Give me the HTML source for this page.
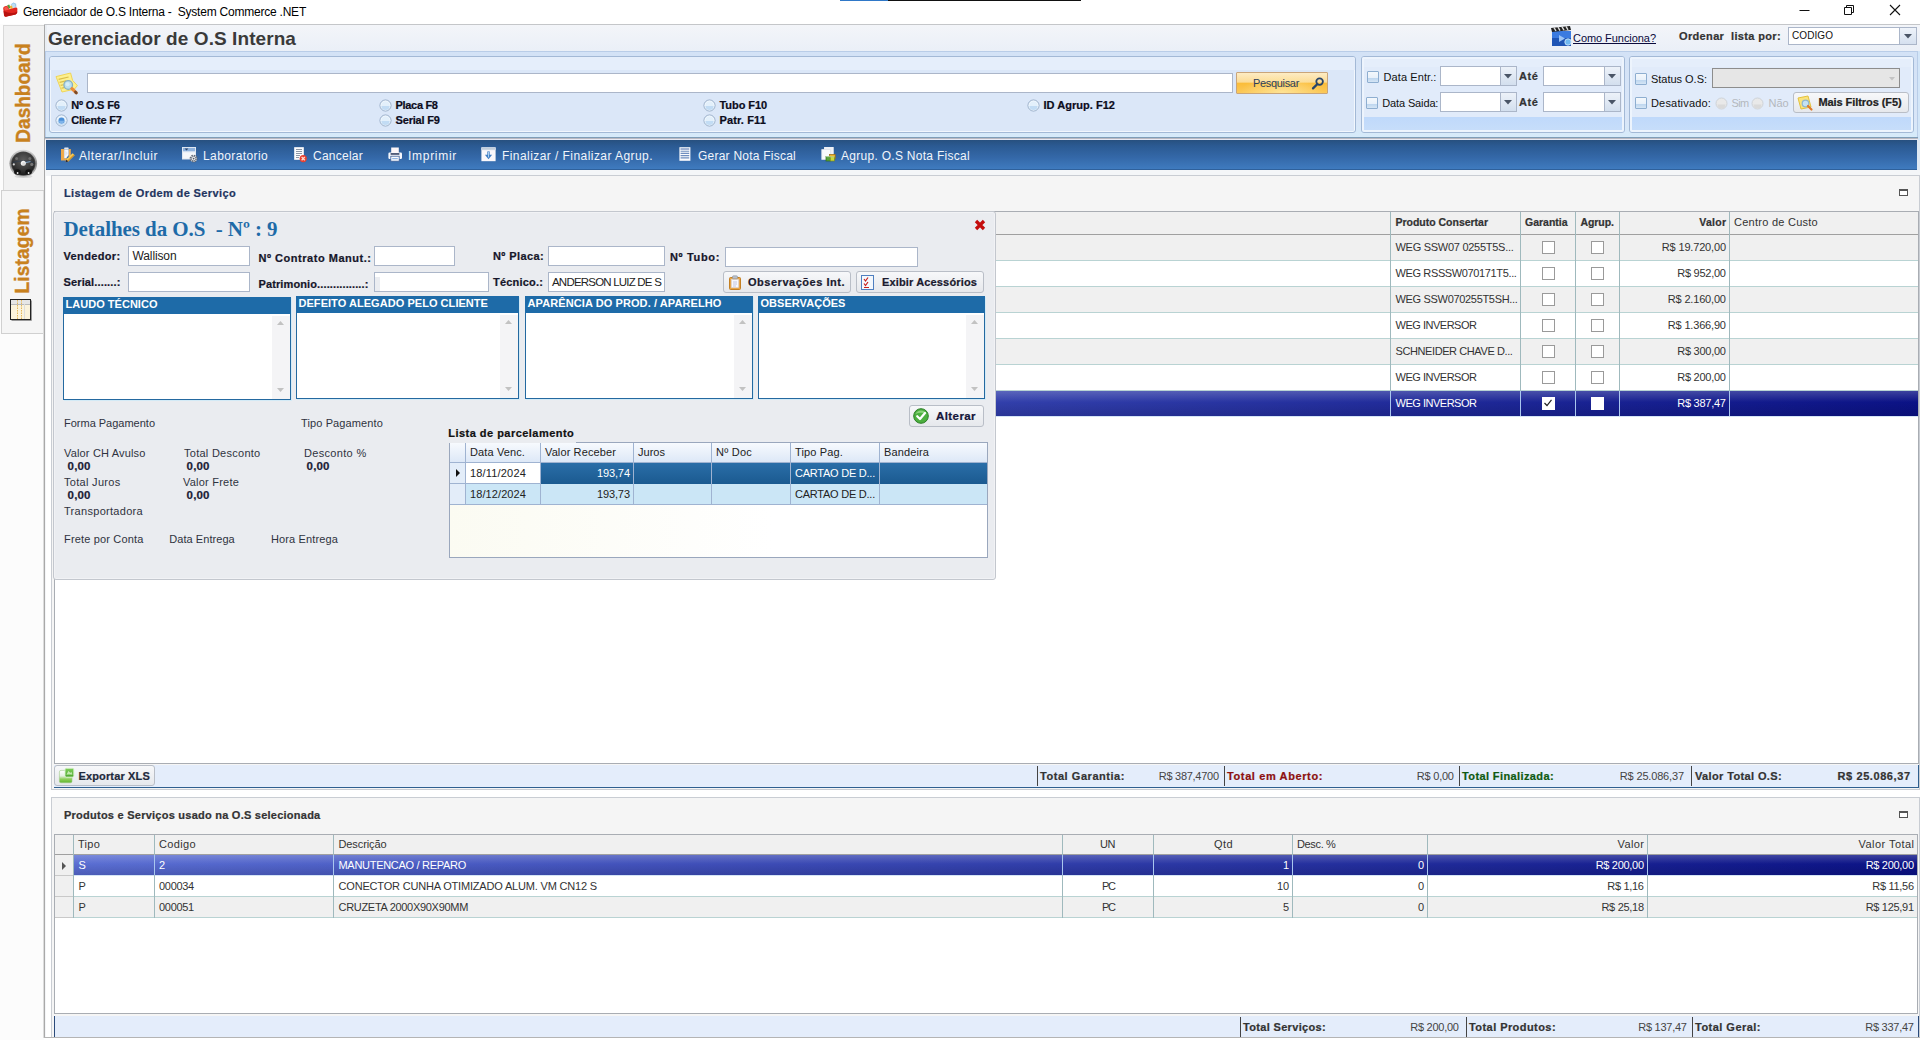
<!DOCTYPE html>
<html lang="pt-BR"><head><meta charset="utf-8"><title>Gerenciador de O.S Interna - System Commerce .NET</title>
<style>
html,body{margin:0;padding:0;background:#fff;}
body{width:1920px;height:1040px;overflow:hidden;font-family:"Liberation Sans",sans-serif;}
#app{position:relative;width:1920px;height:1040px;overflow:hidden;background:#fff;}
#app div{position:absolute;box-sizing:border-box;}
#app svg{position:absolute;overflow:visible;}
.t{position:absolute;white-space:pre;font-family:"Liberation Sans",sans-serif;}
.inp{background:#fff;border:1px solid #abb6c9;}
.btn{border:1px solid #b9bec7;border-radius:3px;background:linear-gradient(#f7f8fa,#e6e8ec);}

</style></head>
<body>
<div id="app">
<div style="left:840px;top:0px;width:48px;height:1px;background:#2f78c8;"></div>
<div style="left:888px;top:0px;width:193px;height:1px;background:#111;"></div>
<svg style="left:2px;top:2px" width="17" height="16" viewBox="0 0 17 16"><path d="M8.5 2.6 L11.4 0.6 L14.2 1.6 L14.6 5.2 L11 6.6Z" fill="#bfdff5"/><path d="M9.4 2.4 L11.6 1.2 L13.4 2 L13.6 4.6" fill="none" stroke="#8fc0e6" stroke-width=".7"/><path d="M5.2 3.2 L7.2 2.6 L8.8 6 L6.6 6.8Z" fill="#4f9e3a"/><path d="M7.6 4 L10 3.4 L10.8 6.4 L8.6 7Z" fill="#f0b43a"/><path d="M1.2 6.2 Q1.2 4.6 3 4.2 L5.2 3.8 L7.4 7.2 L13.6 5.4 Q15.2 5.2 15.4 6.8 L15.2 10.6 Q15 11.8 13.6 12.4 L4.6 14.6 Q2.6 15 2 13.4 Z" fill="#e2261f"/><path d="M1.6 9 L2.2 13.4 Q2.8 14.8 4.6 14.6 L13.6 12.4 Q15 11.8 15.2 10.6 L15.3 9.4 Q10 13 1.6 9Z" fill="#b8120f"/><path d="M2 6.2 Q2.4 5 3.6 4.8 L5 4.6 L7 7.8 L3 8.6Z" fill="#f4574a"/></svg>
<span class="t" style="top:5.00px;font-size:12px;line-height:14px;letter-spacing:-0.222px;left:23.00px;color:#000;">Gerenciador de O.S Interna -  System Commerce .NET</span>
<svg style="left:1790px;top:-1px" width="130" height="22" viewBox="0 0 130 22"><path d="M9.5 11.5 H19.5" stroke="#111" stroke-width="1" fill="none"/><path d="M54.5 8.5 H61.5 V15.5 H54.5 Z M56.5 8.5 V6.5 H63.5 V13.5 H61.5" stroke="#111" stroke-width="1" fill="none"/><path d="M100 6 L110 16 M110 6 L100 16" stroke="#111" stroke-width="1.1" fill="none"/></svg>
<div style="left:0px;top:24px;width:44px;height:1016px;background:#fcfcfc;"></div>
<div style="left:3px;top:25px;width:42px;height:166px;background:#f1f1f1;border:1px solid #d9d9d9;border-right:none;"></div>
<div style="left:1px;top:190px;width:44px;height:144px;background:#f5f5f5;border:1px solid #d0d0d0;border-right:none;"></div>
<div style="left:43px;top:191px;width:1px;height:847px;background:#dcdcdc;"></div>
<div style="left:44px;top:24px;width:1px;height:1014px;background:#a9a9a9;"></div>
<div style="left:45px;top:24px;width:2px;height:116px;background:#e9edf2;"></div>
<div style="left:45px;top:140px;width:1px;height:898px;background:#f4f5f7;"></div>
<span class="t" style="left:23px;top:93px;font-size:19px;line-height:20px;font-weight:bold;color:#c8811e;letter-spacing:0px;-webkit-text-stroke:0.35px #c8811e;transform:translate(-50%,-50%) rotate(-90deg) scale(1,1.1);">Dashboard</span>
<span class="t" style="left:21.5px;top:251px;font-size:19px;line-height:20px;font-weight:bold;color:#c8811e;letter-spacing:0.2px;-webkit-text-stroke:0.35px #c8811e;transform:translate(-50%,-50%) rotate(-90deg) scale(1,1.1);">Listagem</span>
<svg style="left:9px;top:149px" width="29" height="30" viewBox="0 0 29 30"><defs><radialGradient id="gg" cx="50%" cy="35%" r="65%"><stop offset="0" stop-color="#5e5e5e"/><stop offset="0.6" stop-color="#3a3a3a"/><stop offset="1" stop-color="#1c1c1c"/></radialGradient><linearGradient id="gr" x1="0" y1="0" x2="0" y2="1"><stop offset="0" stop-color="#d8d8d8"/><stop offset="0.5" stop-color="#8a8a8a"/><stop offset="1" stop-color="#c4c4c4"/></linearGradient></defs><ellipse cx="14.5" cy="27.5" rx="9" ry="1.6" fill="#d9d9d9"/><circle cx="14.3" cy="14.6" r="13.8" fill="url(#gr)"/><circle cx="14.3" cy="14.6" r="12.2" fill="#4a4a4a"/><circle cx="14.3" cy="14.6" r="11.4" fill="url(#gg)"/><path d="M3.5 13 Q14.3 9.5 25 13 L25 14.2 Q14.3 11 3.5 14.2Z" fill="#2b3d52" opacity=".55"/><circle cx="7.6" cy="9.4" r="1.5" fill="#6e6e6e"/><circle cx="20.8" cy="9.4" r="1.5" fill="#6e6e6e"/><circle cx="4.8" cy="15.4" r="1.1" fill="#d6d6d6"/><circle cx="22.8" cy="15.4" r="1.6" fill="#777"/><path d="M14.3 14 L21.5 12.6" stroke="#7fa3c4" stroke-width="1"/><circle cx="14.3" cy="14.2" r="2.5" fill="#f4f4f4"/><circle cx="14.6" cy="14.8" r="1.6" fill="#c9c9c9" opacity=".6"/><ellipse cx="8.4" cy="23" rx="3.3" ry="2.8" fill="#141414"/><ellipse cx="19.6" cy="23" rx="3.3" ry="2.8" fill="#141414"/><circle cx="8.6" cy="24" r=".9" fill="#e8e8e8"/><circle cx="19.6" cy="24" r=".9" fill="#e8e8e8"/></svg>
<svg style="left:10px;top:299px" width="22" height="22" viewBox="0 0 22 22"><rect x="0.5" y="0.5" width="20" height="20" fill="#fbf3dc" stroke="#222"/><rect x="1" y="1" width="19" height="4" fill="#e6e6e6"/><path d="M1 5.5 H20" stroke="#bbb"/><path d="M7.5 1 V20 M11.5 1 V20" stroke="#e3b65a" stroke-dasharray="1.5 1"/><path d="M14.5 5 V20" stroke="#ddd"/><path d="M1.5 21.5 H21.5 V1.5" stroke="#999" fill="none"/></svg>
<div style="left:44px;top:24px;width:1876px;height:1px;background:#c4c6c9;"></div>
<div style="left:47px;top:25px;width:1873px;height:27px;background:linear-gradient(#f3f5f9,#eaeff7);"></div>
<span class="t" style="top:28.00px;font-size:19px;line-height:21px;letter-spacing:0.076px;left:48.00px;color:#3a3a3a;font-weight:bold;">Gerenciador de O.S Interna</span>
<svg style="left:1551px;top:25.6px" width="21" height="21" viewBox="0 0 21 21"><rect x="1" y="5" width="19" height="15" fill="#1f55b5"/><rect x="1" y="5" width="19" height="7" fill="#3b7be0"/><path d="M0 2 L19 0 L20 4 L1 6 Z" fill="#222"/><path d="M3 1.6 L5 5 M7 1.2 L9 4.6 M11 .8 L13 4.2 M15 .4 L17 3.8" stroke="#ddd" stroke-width="1.4"/><path d="M8 9 L14 12.5 L8 16 Z" fill="#9cc4f5"/><circle cx="17" cy="16" r="3.2" fill="#6fb7f0" stroke="#d8ecfb" stroke-width=".8"/></svg>
<span class="t" style="top:32.00px;font-size:11px;line-height:12px;letter-spacing:-0.055px;left:1573.00px;color:#0a0a3c;text-decoration:underline;">Como Funciona?</span>
<span class="t" style="top:30.00px;font-size:11px;line-height:12px;letter-spacing:0.350px;left:1679.00px;color:#333;font-weight:bold;-webkit-text-stroke:0.22px;">Ordenar  lista por:</span>
<div class="inp" style="left:1788px;top:27px;width:129px;height:18px;"></div>
<div style="left:1899px;top:28px;width:17px;height:16px;background:linear-gradient(#eef3fa,#d5e0ef);border-left:1px solid #abb6c9;"></div>
<svg style="left:1904px;top:34px" width="8" height="5" viewBox="0 0 8 5"><path d="M0 0 H8 L4 4.5Z" fill="#4a5566"/></svg>
<span class="t" style="top:30.00px;font-size:10px;line-height:11px;letter-spacing:0.074px;left:1792.00px;color:#111;">CODIGO</span>
<div style="left:45px;top:51px;width:1875px;height:89px;background:#d3e6f8;"></div>
<div style="left:45px;top:51px;width:1873px;height:87px;background:linear-gradient(#d3e2f6,#d9e6f8 80%,#d6ebfa);border:1px solid #b9cde8;border-bottom:none;"></div>
<div style="left:45px;top:137px;width:1873px;height:1px;background:#7f9db8;"></div>
<div style="left:45px;top:138px;width:1873px;height:1px;background:#b8b8c0;"></div>
<div style="left:45px;top:139px;width:1873px;height:1px;background:#e6e8f3;"></div>
<div style="left:49px;top:56px;width:1307px;height:77px;background:#dbe7f8;border:1px solid #a3b9d6;border-radius:3px;box-shadow:inset 0 0 0 1px #f2f7fd;overflow:hidden;"><div style="left:0;top:0;right:0;height:13px;background:#e5eefb;"></div></div>
<div style="left:1361px;top:56px;width:264px;height:77px;background:#e1ebfa;border:1px solid #a3b9d6;border-radius:3px;box-shadow:inset 0 0 0 1px #f2f7fd;overflow:hidden;"><div style="left:0;top:0;right:0;height:10px;background:#e5eefb;"></div><div style="left:0;right:0;top:60px;bottom:0;background:linear-gradient(#bfd9fb,#c8defa);"></div><div style="left:0;top:0;right:0;bottom:0;border:2px solid #edf4fd;border-radius:2px;"></div></div>
<div style="left:1629px;top:56px;width:285px;height:77px;background:#e1ebfa;border:1px solid #a3b9d6;border-radius:3px;box-shadow:inset 0 0 0 1px #f2f7fd;overflow:hidden;"><div style="left:0;top:0;right:0;height:10px;background:#e5eefb;"></div><div style="left:0;right:0;top:60px;bottom:0;background:linear-gradient(#bfd9fb,#c8defa);"></div><div style="left:0;top:0;right:0;bottom:0;border:2px solid #edf4fd;border-radius:2px;"></div></div>
<svg style="left:55px;top:72px" width="24" height="23" viewBox="0 0 24 23"><path d="M1 4.6 L15.6 1 L17.6 8.4 L22.4 13.6 L19.4 17.2 L7 20 Z" fill="#fdf08e" stroke="#efd55a" stroke-width="1"/><path d="M3.6 7.4 L13.6 5 M4.6 10.4 L11 8.9 M5.6 13.4 L8.4 12.8 M6.4 16.2 L9 15.6" stroke="#d9bd4a" stroke-width="1.1"/><circle cx="13.2" cy="13" r="4.3" fill="#b9dff0" stroke="#86aebf" stroke-width="1.3"/><circle cx="12.6" cy="12.2" r="2" fill="#d4ecf7"/><path d="M17 16.6 L21 20.6" stroke="#e98a3a" stroke-width="3.2" stroke-linecap="round"/><path d="M20.4 20 L21.4 21" stroke="#7a4a2a" stroke-width="2.6" stroke-linecap="round"/></svg>
<div class="inp" style="left:87px;top:73px;width:1146px;height:20px;"></div>
<div style="left:1236px;top:72px;width:92px;height:22px;border:1px solid #c9a57a;border-radius:1px;background:radial-gradient(ellipse at 50% 100%,rgba(255,236,170,.75),rgba(255,236,170,0) 65%),linear-gradient(#fdecc4 0%,#fcdc97 45%,#fbbd3a 52%,#fbc95a 100%);"></div>
<span class="t" style="top:77.00px;font-size:11px;line-height:12px;letter-spacing:-0.324px;left:1253.00px;color:#2b3d5c;">Pesquisar</span>
<svg style="left:1311px;top:77px" width="14" height="13" viewBox="0 0 14 13"><circle cx="8.6" cy="4.6" r="3.3" fill="none" stroke="#28456b" stroke-width="1.8"/><path d="M6.2 7.2 L2 11.4" stroke="#28456b" stroke-width="2.3" stroke-linecap="round"/></svg>
<svg style="left:54.5px;top:99.3px" width="13" height="13" viewBox="0 0 13 13"><circle cx="6.5" cy="6.5" r="5.5" fill="#e3f0fb" stroke="#8fa6c2" stroke-width="1"/><circle cx="6.5" cy="6.5" r="4.6" fill="none" stroke="#f4f9fe" stroke-width=".8"/><path d="M2.4 7 A4.1 4.1 0 0 0 10.6 7Z" fill="#c2dcf4"/></svg>
<span class="t" style="top:99.00px;font-size:11px;line-height:12px;letter-spacing:-0.151px;left:71.20px;color:#0c0c1c;font-weight:bold;-webkit-text-stroke:0.22px;">Nº O.S F6</span>
<svg style="left:54.5px;top:114.3px" width="13" height="13" viewBox="0 0 13 13"><circle cx="6.5" cy="6.5" r="5.5" fill="#e3f0fb" stroke="#8fa6c2" stroke-width="1"/><circle cx="6.5" cy="6.5" r="4.6" fill="none" stroke="#f4f9fe" stroke-width=".8"/><path d="M2.4 7 A4.1 4.1 0 0 0 10.6 7Z" fill="#c2dcf4"/><circle cx="6.5" cy="6.5" r="3" fill="#4c8fd6"/><path d="M4 6.8 A2.5 2.5 0 0 0 9 6.8Z" fill="#7fb4ea"/></svg>
<span class="t" style="top:114.00px;font-size:11px;line-height:12px;letter-spacing:-0.207px;left:71.20px;color:#0c0c1c;font-weight:bold;-webkit-text-stroke:0.22px;">Cliente F7</span>
<svg style="left:378.5px;top:99.3px" width="13" height="13" viewBox="0 0 13 13"><circle cx="6.5" cy="6.5" r="5.5" fill="#e3f0fb" stroke="#8fa6c2" stroke-width="1"/><circle cx="6.5" cy="6.5" r="4.6" fill="none" stroke="#f4f9fe" stroke-width=".8"/><path d="M2.4 7 A4.1 4.1 0 0 0 10.6 7Z" fill="#c2dcf4"/></svg>
<span class="t" style="top:99.00px;font-size:11px;line-height:12px;letter-spacing:-0.330px;left:395.60px;color:#0c0c1c;font-weight:bold;-webkit-text-stroke:0.22px;">Placa F8</span>
<svg style="left:378.5px;top:114.3px" width="13" height="13" viewBox="0 0 13 13"><circle cx="6.5" cy="6.5" r="5.5" fill="#e3f0fb" stroke="#8fa6c2" stroke-width="1"/><circle cx="6.5" cy="6.5" r="4.6" fill="none" stroke="#f4f9fe" stroke-width=".8"/><path d="M2.4 7 A4.1 4.1 0 0 0 10.6 7Z" fill="#c2dcf4"/></svg>
<span class="t" style="top:114.00px;font-size:11px;line-height:12px;letter-spacing:-0.207px;left:395.60px;color:#0c0c1c;font-weight:bold;-webkit-text-stroke:0.22px;">Serial F9</span>
<svg style="left:702.5px;top:99.3px" width="13" height="13" viewBox="0 0 13 13"><circle cx="6.5" cy="6.5" r="5.5" fill="#e3f0fb" stroke="#8fa6c2" stroke-width="1"/><circle cx="6.5" cy="6.5" r="4.6" fill="none" stroke="#f4f9fe" stroke-width=".8"/><path d="M2.4 7 A4.1 4.1 0 0 0 10.6 7Z" fill="#c2dcf4"/></svg>
<span class="t" style="top:99.00px;font-size:11px;line-height:12px;letter-spacing:-0.072px;left:719.50px;color:#0c0c1c;font-weight:bold;-webkit-text-stroke:0.22px;">Tubo F10</span>
<svg style="left:702.5px;top:114.3px" width="13" height="13" viewBox="0 0 13 13"><circle cx="6.5" cy="6.5" r="5.5" fill="#e3f0fb" stroke="#8fa6c2" stroke-width="1"/><circle cx="6.5" cy="6.5" r="4.6" fill="none" stroke="#f4f9fe" stroke-width=".8"/><path d="M2.4 7 A4.1 4.1 0 0 0 10.6 7Z" fill="#c2dcf4"/></svg>
<span class="t" style="top:114.00px;font-size:11px;line-height:12px;letter-spacing:0.139px;left:719.50px;color:#0c0c1c;font-weight:bold;-webkit-text-stroke:0.22px;">Patr. F11</span>
<svg style="left:1026.5px;top:99.3px" width="13" height="13" viewBox="0 0 13 13"><circle cx="6.5" cy="6.5" r="5.5" fill="#e3f0fb" stroke="#8fa6c2" stroke-width="1"/><circle cx="6.5" cy="6.5" r="4.6" fill="none" stroke="#f4f9fe" stroke-width=".8"/><path d="M2.4 7 A4.1 4.1 0 0 0 10.6 7Z" fill="#c2dcf4"/></svg>
<span class="t" style="top:99.00px;font-size:11px;line-height:12px;letter-spacing:0.031px;left:1043.50px;color:#0c0c1c;font-weight:bold;-webkit-text-stroke:0.22px;">ID Agrup. F12</span>
<div style="left:1367px;top:71px;width:12px;height:12px;background:linear-gradient(#f4f8fc 0%,#e9f1fa 55%,#bcd5ef 60%,#d5e5f5 100%);border:1px solid #8eaed0;border-radius:1px;"></div>
<span class="t" style="top:71.00px;font-size:11px;line-height:12px;letter-spacing:0.093px;left:1383.50px;color:#111;">Data Entr.:</span>
<div style="left:1366px;top:97px;width:12px;height:12px;background:linear-gradient(#f4f8fc 0%,#e9f1fa 55%,#bcd5ef 60%,#d5e5f5 100%);border:1px solid #8eaed0;border-radius:1px;"></div>
<span class="t" style="top:97.00px;font-size:11px;line-height:12px;letter-spacing:-0.135px;left:1382.30px;color:#111;">Data Saida:</span>
<div class="inp" style="left:1440px;top:66px;width:77px;height:20px;"></div>
<div style="left:1500px;top:67px;width:16px;height:18px;background:linear-gradient(#edf2f9,#d3dfee);border-left:1px solid #abb6c9;"></div>
<svg style="left:1504.0px;top:73.5px" width="8" height="5" viewBox="0 0 8 5"><path d="M0 0 H8 L4 4.5Z" fill="#4a5566"/></svg>
<div class="inp" style="left:1543px;top:66px;width:78px;height:20px;"></div>
<div style="left:1604px;top:67px;width:16px;height:18px;background:linear-gradient(#edf2f9,#d3dfee);border-left:1px solid #abb6c9;"></div>
<svg style="left:1608.0px;top:73.5px" width="8" height="5" viewBox="0 0 8 5"><path d="M0 0 H8 L4 4.5Z" fill="#4a5566"/></svg>
<div class="inp" style="left:1440px;top:92px;width:77px;height:20px;"></div>
<div style="left:1500px;top:93px;width:16px;height:18px;background:linear-gradient(#edf2f9,#d3dfee);border-left:1px solid #abb6c9;"></div>
<svg style="left:1504.0px;top:99.5px" width="8" height="5" viewBox="0 0 8 5"><path d="M0 0 H8 L4 4.5Z" fill="#4a5566"/></svg>
<div class="inp" style="left:1543px;top:92px;width:78px;height:20px;"></div>
<div style="left:1604px;top:93px;width:16px;height:18px;background:linear-gradient(#edf2f9,#d3dfee);border-left:1px solid #abb6c9;"></div>
<svg style="left:1608.0px;top:99.5px" width="8" height="5" viewBox="0 0 8 5"><path d="M0 0 H8 L4 4.5Z" fill="#4a5566"/></svg>
<span class="t" style="top:70.00px;font-size:11px;line-height:12px;letter-spacing:0.592px;left:1519.00px;color:#333;font-weight:bold;-webkit-text-stroke:0.22px;">Até</span>
<span class="t" style="top:96.00px;font-size:11px;line-height:12px;letter-spacing:0.592px;left:1519.00px;color:#333;font-weight:bold;-webkit-text-stroke:0.22px;">Até</span>
<div style="left:1635px;top:73px;width:12px;height:12px;background:linear-gradient(#f4f8fc 0%,#e9f1fa 55%,#bcd5ef 60%,#d5e5f5 100%);border:1px solid #8eaed0;border-radius:1px;"></div>
<span class="t" style="top:73.00px;font-size:11px;line-height:12px;letter-spacing:-0.022px;left:1651.00px;color:#111;">Status O.S:</span>
<div style="left:1635px;top:97px;width:12px;height:12px;background:linear-gradient(#f4f8fc 0%,#e9f1fa 55%,#bcd5ef 60%,#d5e5f5 100%);border:1px solid #8eaed0;border-radius:1px;"></div>
<span class="t" style="top:97.00px;font-size:11px;line-height:12px;letter-spacing:0.174px;left:1651.00px;color:#111;">Desativado:</span>
<div style="left:1712px;top:68px;width:188px;height:20px;background:#e6e6e6;border:1px solid #8d8d8d;"></div>
<svg style="left:1889px;top:77.0px" width="6" height="4" viewBox="0 0 6 4"><path d="M0 0 H6 L3 3.5Z" fill="#c3c3c3"/></svg>
<svg style="left:1714.5px;top:97.0px" width="13" height="13" viewBox="0 0 13 13"><circle cx="6.5" cy="6.5" r="5.5" fill="#e9e9e9" stroke="#cfd3d8"/><path d="M2.5 7.5 A4 4 0 0 0 10.5 7.5Z" fill="#dadada"/></svg>
<span class="t" style="top:97.00px;font-size:11px;line-height:12px;letter-spacing:-0.648px;left:1731.50px;color:#b4b8bd;">Sim</span>
<svg style="left:1751.0px;top:97.0px" width="13" height="13" viewBox="0 0 13 13"><circle cx="6.5" cy="6.5" r="5.5" fill="#e9e9e9" stroke="#cfd3d8"/><path d="M2.5 7.5 A4 4 0 0 0 10.5 7.5Z" fill="#dadada"/></svg>
<span class="t" style="top:97.00px;font-size:11px;line-height:12px;letter-spacing:-0.060px;left:1768.50px;color:#b4b8bd;">Não</span>
<div class="btn" style="left:1793px;top:92px;width:116px;height:21px;"></div>
<svg style="left:1797px;top:95px" width="17" height="16" viewBox="0 0 17 16"><path d="M1 3 L11 1 L14 12 L4 14 Z" fill="#fbe37a" stroke="#e3c23e"/><circle cx="8.5" cy="8.5" r="3.3" fill="#c4e2f3" stroke="#8fb6cf" stroke-width="1.2"/><path d="M11 11 L14.5 14.5" stroke="#e07a2a" stroke-width="2.2" stroke-linecap="round"/></svg>
<span class="t" style="top:96.00px;font-size:11px;line-height:12px;letter-spacing:-0.079px;left:1818.50px;color:#222;font-weight:bold;-webkit-text-stroke:0.22px;">Mais Filtros (F5)</span>
<div style="left:46px;top:140px;width:1871px;height:30px;background:linear-gradient(#27507f,#2b5a92 20%,#3468a8 60%,#3f7bbf);border-bottom:1px solid #2f619c;"></div>
<div style="left:1917px;top:140px;width:3px;height:30px;background:#dfe9f3;"></div>
<div style="left:46px;top:170px;width:1874px;height:6px;background:#f4f6f8;"></div>
<svg style="left:59.5px;top:147px" width="16" height="16" viewBox="0 0 16 16"><path d="M1 2 H4.2 V11.2 H8.5 V13.4 H1 Z" fill="#eda94b"/><path d="M8.6 2 H10.8 V8.2 L8.6 10.4 Z" fill="#eda94b"/><rect x="4.2" y="0.4" width="4.4" height="2.2" rx=".6" fill="#e4e9f1"/><path d="M4.2 2.6 H8.6 V8 L6.2 11.2 H4.2Z" fill="#f6f8fc"/><path d="M5.2 3.2 L7.8 6.2 L5.2 9 Z" fill="#dfe6f2"/><path d="M6.3 12.6 L12.6 6.3 L14.6 8.3 L8.3 14.6 L5.6 15.3Z" fill="#f6cf55"/><path d="M7.4 13.6 L13.6 7.4 L14.6 8.3 L8.3 14.6Z" fill="#d9962a"/><path d="M5.6 15.3 L6.3 12.6 L8.3 14.6Z" fill="#2a2438"/></svg>
<span class="t" style="top:149.00px;font-size:12px;line-height:14px;letter-spacing:0.554px;left:79.00px;color:#f1f5fb;">Alterar/Incluir</span>
<svg style="left:182px;top:147px" width="16" height="16" viewBox="0 0 16 16"><rect x="0.5" y="0.5" width="13" height="11.5" fill="#f4f7fb" stroke="#dfe7f1"/><rect x="1" y="1" width="12" height="3.2" fill="#8fb3de"/><path d="M2.6 1.6 H6.4 L4.5 3.6Z" fill="#2f4468"/><rect x="1" y="4.2" width="12" height="1" fill="#c9d9ee"/><circle cx="11.6" cy="11.6" r="3.4" fill="#eef0f3" stroke="#5b6472" stroke-width="1.1" stroke-dasharray="1.6 1.05"/><circle cx="11.6" cy="11.6" r="2.3" fill="#f2f3f5" stroke="#6b7482" stroke-width=".9"/><circle cx="11.6" cy="11.6" r=".9" fill="#4f5866"/></svg>
<span class="t" style="top:149.00px;font-size:12px;line-height:14px;letter-spacing:0.390px;left:203.00px;color:#f1f5fb;">Laboratorio</span>
<svg style="left:294px;top:147px" width="16" height="16" viewBox="0 0 16 16"><path d="M0.5 0.5 H9.5 V12.5 H0.5Z" fill="#fbfcfe" stroke="#d9e0ea"/><path d="M2 2.5 H8 M2 4.5 H8 M2 6.5 H8 M2 8.5 H6 M2 10.5 H5" stroke="#8d97a6" stroke-width="1"/><circle cx="9.2" cy="11.6" r="3.6" fill="#e8402f"/><path d="M7.6 10 L10.8 13.2 M10.8 10 L7.6 13.2" stroke="#ffd9cf" stroke-width="1.3"/></svg>
<span class="t" style="top:149.00px;font-size:12px;line-height:14px;letter-spacing:0.247px;left:313.00px;color:#f1f5fb;">Cancelar</span>
<svg style="left:388px;top:147.3px" width="16" height="16" viewBox="0 0 16 16"><rect x="3.2" y="0.5" width="7.6" height="6" fill="#fdf6f8"/><rect x="0.4" y="5.6" width="13.6" height="6.4" rx="1.2" fill="#f7f8fc"/><rect x="2.6" y="6.2" width="8.8" height="1.5" fill="#28365a"/><rect x="2.8" y="9.2" width="8.4" height="5" fill="#f7f8fc" stroke="#3c5f98" stroke-width=".8"/><path d="M4.2 11.6 H9.8" stroke="#8fb5e6" stroke-width="1.2"/></svg>
<span class="t" style="top:149.00px;font-size:12px;line-height:14px;letter-spacing:0.709px;left:408.00px;color:#f1f5fb;">Imprimir</span>
<svg style="left:481px;top:147.3px" width="16" height="16" viewBox="0 0 16 16"><rect x="0.4" y="0.4" width="14.2" height="13.8" fill="#fbf8fb"/><rect x="0.4" y="0.4" width="14.2" height="2.8" fill="#d4dde9"/><path d="M1 1.8 H14" stroke="#aebccc" stroke-width=".7"/><path d="M7.5 4.4 V9.4" stroke="#3f7fc6" stroke-width="2.4"/><path d="M3.9 7.8 L7.5 12.2 L11.1 7.8 Z" fill="#3f7fc6"/><path d="M7.5 5 V10.4" stroke="#b9d6f3" stroke-width=".9"/></svg>
<span class="t" style="top:149.00px;font-size:12px;line-height:14px;letter-spacing:0.438px;left:502.00px;color:#f1f5fb;">Finalizar / Finalizar Agrup.</span>
<svg style="left:679px;top:147px" width="16" height="16" viewBox="0 0 16 16"><rect x="0.4" y="0.2" width="11" height="13.6" fill="#fafbfd"/><path d="M1.6 2 H10.2 M1.6 4.2 H10.2 M1.6 6.4 H10.2 M1.6 8.6 H10.2 M1.6 10.8 H10.2" stroke="#6f8ebf" stroke-width="1.15"/><rect x="1.6" y="1.4" width="8.6" height="1.3" fill="#93a9cf"/></svg>
<span class="t" style="top:149.00px;font-size:12px;line-height:14px;letter-spacing:0.234px;left:698.00px;color:#f1f5fb;">Gerar Nota Fiscal</span>
<svg style="left:821px;top:147px" width="16" height="16" viewBox="0 0 16 16"><rect x="3.6" y="0.4" width="8.6" height="9.6" fill="#eef1f6" stroke="#fff" stroke-width=".8"/><rect x="0.8" y="2.6" width="8.6" height="9.8" fill="#f9fafc" stroke="#dfe4ec" stroke-width=".8"/><rect x="8.6" y="7.4" width="5.6" height="4.4" fill="#f0b42c" stroke="#9a6b12" stroke-width=".7"/><rect x="5" y="9.6" width="4.4" height="4.4" fill="#5aa53a" stroke="#2f6a1c" stroke-width=".7"/><rect x="9.2" y="9.8" width="4.2" height="4.2" fill="#c9d93a" stroke="#7a8a1a" stroke-width=".7"/><path d="M5 9.6 H9.4 M9.2 9.8 H13.4" stroke="#dff3c8" stroke-width=".7"/></svg>
<span class="t" style="top:149.00px;font-size:12px;line-height:14px;letter-spacing:0.286px;left:841.00px;color:#f1f5fb;">Agrup. O.S Nota Fiscal</span>
<div style="left:51px;top:175px;width:1869px;height:615px;background:#f5f5f5;border:1px solid #c9cdd3;"></div>
<span class="t" style="top:187.00px;font-size:11px;line-height:12px;letter-spacing:0.379px;left:64.00px;color:#1f3560;font-weight:bold;-webkit-text-stroke:0.22px;">Listagem de Ordem de Serviço</span>
<svg style="left:1899px;top:189px" width="9" height="7" viewBox="0 0 9 7"><rect x="0.5" y="0.5" width="8" height="6" fill="#fff" stroke="#555"/><rect x="0" y="0" width="9" height="2" fill="#555"/></svg>
<div style="left:54px;top:211px;width:1865px;height:553px;background:#fff;border:1px solid #a9adb3;"></div>
<div style="left:55px;top:212px;width:1863px;height:23px;background:#f0f0f0;border-bottom:1px solid #a0a0a0;"></div>
<div style="left:55px;top:235px;width:1863px;height:26px;background:#f0f0f0;border-bottom:1px solid #b9d3d3;"></div>
<span class="t" style="top:241.00px;font-size:11px;line-height:12px;letter-spacing:-0.275px;left:1395.50px;color:#333;">WEG SSW07 0255T5S...</span>
<span class="t" style="top:241.00px;font-size:11px;line-height:12px;letter-spacing:-0.171px;right:194.17px;color:#333;">R$ 19.720,00</span>
<div style="left:1542px;top:241px;width:13px;height:13px;background:#fff;border:1px solid #9a9a9a;"></div>
<div style="left:1591px;top:241px;width:13px;height:13px;background:#fff;border:1px solid #9a9a9a;"></div>
<div style="left:55px;top:261px;width:1863px;height:26px;background:#fff;border-bottom:1px solid #b9d3d3;"></div>
<span class="t" style="top:267.00px;font-size:11px;line-height:12px;letter-spacing:-0.369px;left:1395.50px;color:#333;">WEG RSSSW070171T5...</span>
<span class="t" style="top:267.00px;font-size:11px;line-height:12px;letter-spacing:-0.251px;right:194.25px;color:#333;">R$ 952,00</span>
<div style="left:1542px;top:267px;width:13px;height:13px;background:#fff;border:1px solid #9a9a9a;"></div>
<div style="left:1591px;top:267px;width:13px;height:13px;background:#fff;border:1px solid #9a9a9a;"></div>
<div style="left:55px;top:287px;width:1863px;height:26px;background:#f0f0f0;border-bottom:1px solid #b9d3d3;"></div>
<span class="t" style="top:293.00px;font-size:11px;line-height:12px;letter-spacing:-0.319px;left:1395.50px;color:#333;">WEG SSW070255T5SH...</span>
<span class="t" style="top:293.00px;font-size:11px;line-height:12px;letter-spacing:-0.176px;right:194.18px;color:#333;">R$ 2.160,00</span>
<div style="left:1542px;top:293px;width:13px;height:13px;background:#fff;border:1px solid #9a9a9a;"></div>
<div style="left:1591px;top:293px;width:13px;height:13px;background:#fff;border:1px solid #9a9a9a;"></div>
<div style="left:55px;top:313px;width:1863px;height:26px;background:#fff;border-bottom:1px solid #b9d3d3;"></div>
<span class="t" style="top:319.00px;font-size:11px;line-height:12px;letter-spacing:-0.482px;left:1395.50px;color:#333;">WEG INVERSOR</span>
<span class="t" style="top:319.00px;font-size:11px;line-height:12px;letter-spacing:-0.176px;right:194.18px;color:#333;">R$ 1.366,90</span>
<div style="left:1542px;top:319px;width:13px;height:13px;background:#fff;border:1px solid #9a9a9a;"></div>
<div style="left:1591px;top:319px;width:13px;height:13px;background:#fff;border:1px solid #9a9a9a;"></div>
<div style="left:55px;top:339px;width:1863px;height:26px;background:#f0f0f0;border-bottom:1px solid #b9d3d3;"></div>
<span class="t" style="top:345.00px;font-size:11px;line-height:12px;letter-spacing:-0.405px;left:1395.50px;color:#333;">SCHNEIDER CHAVE D...</span>
<span class="t" style="top:345.00px;font-size:11px;line-height:12px;letter-spacing:-0.251px;right:194.25px;color:#333;">R$ 300,00</span>
<div style="left:1542px;top:345px;width:13px;height:13px;background:#fff;border:1px solid #9a9a9a;"></div>
<div style="left:1591px;top:345px;width:13px;height:13px;background:#fff;border:1px solid #9a9a9a;"></div>
<div style="left:55px;top:365px;width:1863px;height:26px;background:#fff;border-bottom:1px solid #b9d3d3;"></div>
<span class="t" style="top:371.00px;font-size:11px;line-height:12px;letter-spacing:-0.482px;left:1395.50px;color:#333;">WEG INVERSOR</span>
<span class="t" style="top:371.00px;font-size:11px;line-height:12px;letter-spacing:-0.251px;right:194.25px;color:#333;">R$ 200,00</span>
<div style="left:1542px;top:371px;width:13px;height:13px;background:#fff;border:1px solid #9a9a9a;"></div>
<div style="left:1591px;top:371px;width:13px;height:13px;background:#fff;border:1px solid #9a9a9a;"></div>
<div style="left:55px;top:391px;width:1863px;height:26px;background:linear-gradient(rgba(255,255,255,.2),rgba(255,255,255,0) 45%,rgba(0,0,40,.16)),linear-gradient(90deg,#5a6ed2,#0b1285);border-bottom:1px solid #d4e4f6;"></div>
<span class="t" style="top:397.00px;font-size:11px;line-height:12px;letter-spacing:-0.482px;left:1395.50px;color:#fff;">WEG INVERSOR</span>
<span class="t" style="top:397.00px;font-size:11px;line-height:12px;letter-spacing:-0.251px;right:194.25px;color:#fff;">R$ 387,47</span>
<div style="left:1542px;top:397px;width:13px;height:13px;background:#fff;border:1px solid #fff;"><svg style="left:0;top:0" width="10" height="10" viewBox="0 0 10 10"><path d="M1.5 5 L4 7.5 L8.5 1.8" fill="none" stroke="#222" stroke-width="1.2"/></svg></div>
<div style="left:1591px;top:397px;width:13px;height:13px;background:#fff;"></div>
<div style="left:1390px;top:212px;width:1px;height:179px;background:#9fb9bd;"></div>
<div style="left:1390px;top:391px;width:1px;height:25px;background:#a9c6ee;"></div>
<div style="left:1520px;top:212px;width:1px;height:179px;background:#9fb9bd;"></div>
<div style="left:1520px;top:391px;width:1px;height:25px;background:#a9c6ee;"></div>
<div style="left:1575px;top:212px;width:1px;height:179px;background:#9fb9bd;"></div>
<div style="left:1575px;top:391px;width:1px;height:25px;background:#a9c6ee;"></div>
<div style="left:1619px;top:212px;width:1px;height:179px;background:#9fb9bd;"></div>
<div style="left:1619px;top:391px;width:1px;height:25px;background:#a9c6ee;"></div>
<div style="left:1729px;top:212px;width:1px;height:179px;background:#9fb9bd;"></div>
<div style="left:1729px;top:391px;width:1px;height:25px;background:#a9c6ee;"></div>
<span class="t" style="top:216.00px;font-size:10.5px;line-height:12px;letter-spacing:-0.015px;left:1395.50px;color:#333;font-weight:bold;-webkit-text-stroke:0.22px;">Produto Consertar</span>
<span class="t" style="top:216.00px;font-size:10.5px;line-height:12px;letter-spacing:-0.013px;left:1525.00px;color:#333;font-weight:bold;-webkit-text-stroke:0.22px;">Garantia</span>
<span class="t" style="top:216.00px;font-size:10.5px;line-height:12px;letter-spacing:-0.055px;left:1580.40px;color:#333;font-weight:bold;-webkit-text-stroke:0.22px;">Agrup.</span>
<span class="t" style="top:216.00px;font-size:10.5px;line-height:12px;letter-spacing:0.264px;right:193.74px;color:#333;font-weight:bold;-webkit-text-stroke:0.22px;">Valor</span>
<span class="t" style="top:216.00px;font-size:11px;line-height:12px;letter-spacing:0.260px;left:1734.00px;color:#333;">Centro de Custo</span>
<div style="left:54px;top:765px;width:1865px;height:23px;background:#e4edfb;border-bottom:1px solid #2f5f8f;border-right:1px solid #2f5f8f;"></div>
<div class="btn" style="left:54px;top:765px;width:101px;height:21px;border-radius:3px;"></div>
<svg style="left:59px;top:768px" width="16" height="16" viewBox="0 0 16 16"><defs><linearGradient id="xg" x1="0" y1="0" x2="0" y2="1"><stop offset="0" stop-color="#ffffff"/><stop offset="0.45" stop-color="#e4efe0"/><stop offset="0.7" stop-color="#8fd05a"/><stop offset="1" stop-color="#5fb52f"/></linearGradient><linearGradient id="xg2" x1="0" y1="0" x2="0" y2="1"><stop offset="0" stop-color="#7fcf5a"/><stop offset="1" stop-color="#4aa52a"/></linearGradient></defs><rect x="0.4" y="2.4" width="12.6" height="12.4" rx="1.6" fill="url(#xg)" stroke="#9fc98a" stroke-width=".6"/><rect x="6" y="0.3" width="8.8" height="8.8" rx="1.4" fill="url(#xg2)" stroke="#d8f0cc" stroke-width=".9"/><path d="M7.8 6.6 L9.6 3.4 L11.2 5.2 L12.4 4.4 L13 6.6" fill="#bfe9a8" stroke="#e8f8df" stroke-width=".5"/></svg>
<span class="t" style="top:770.00px;font-size:11px;line-height:12px;letter-spacing:0.159px;left:78.40px;color:#1f2a3c;font-weight:bold;-webkit-text-stroke:0.22px;">Exportar XLS</span>
<div style="left:1037px;top:766px;width:1px;height:20px;background:#444;"></div>
<div style="left:1224px;top:766px;width:1px;height:20px;background:#444;"></div>
<div style="left:1459px;top:766px;width:1px;height:20px;background:#444;"></div>
<div style="left:1691px;top:766px;width:1px;height:20px;background:#444;"></div>
<span class="t" style="top:770.00px;font-size:11px;line-height:12px;letter-spacing:0.546px;left:1040.00px;color:#333;font-weight:bold;-webkit-text-stroke:0.22px;">Total Garantia:</span>
<span class="t" style="top:770.00px;font-size:11px;line-height:12px;letter-spacing:-0.273px;right:701.27px;color:#444;">R$ 387,4700</span>
<span class="t" style="top:770.00px;font-size:11px;line-height:12px;letter-spacing:0.614px;left:1227.00px;color:#8c1010;font-weight:bold;-webkit-text-stroke:0.22px;">Total em Aberto:</span>
<span class="t" style="top:770.00px;font-size:11px;line-height:12px;letter-spacing:-0.218px;right:466.22px;color:#444;">R$ 0,00</span>
<span class="t" style="top:770.00px;font-size:11px;line-height:12px;letter-spacing:0.391px;left:1462.00px;color:#0f5a10;font-weight:bold;-webkit-text-stroke:0.22px;">Total Finalizada:</span>
<span class="t" style="top:770.00px;font-size:11px;line-height:12px;letter-spacing:-0.171px;right:236.17px;color:#444;">R$ 25.086,37</span>
<span class="t" style="top:770.00px;font-size:11px;line-height:12px;letter-spacing:0.369px;left:1695.00px;color:#333;font-weight:bold;-webkit-text-stroke:0.22px;">Valor Total O.S:</span>
<span class="t" style="top:770.00px;font-size:11px;line-height:12px;letter-spacing:0.579px;right:9.42px;color:#333;font-weight:bold;-webkit-text-stroke:0.22px;">R$ 25.086,37</span>
<div style="left:53px;top:211px;width:943px;height:369px;background:#eaecf0;border:1px solid #c3c7ce;border-radius:3px;box-shadow:inset 0 0 0 1px #f1f2f5;"></div>
<span class="t" style="top:217.00px;font-size:21px;line-height:24px;letter-spacing:-0.071px;left:63.50px;color:#1e6ba8;font-weight:bold;font-family:'Liberation Serif',serif;">Detalhes da O.S  - Nº : 9</span>
<svg style="left:974px;top:219px" width="12" height="12" viewBox="0 0 12 12"><path d="M2 2 L10 10 M10 2 L2 10" stroke="#c40d0d" stroke-width="3.3" stroke-linecap="butt"/></svg>
<span class="t" style="top:250.00px;font-size:11px;line-height:12px;letter-spacing:0.357px;left:63.50px;color:#16162a;font-weight:bold;-webkit-text-stroke:0.22px;">Vendedor:</span>
<div class="inp" style="left:128px;top:246px;width:122px;height:20px;"></div>
<span class="t" style="top:249.00px;font-size:12px;line-height:14px;letter-spacing:-0.113px;left:132.50px;color:#222;">Wallison</span>
<span class="t" style="top:252.00px;font-size:11px;line-height:12px;letter-spacing:0.526px;left:258.50px;color:#16162a;font-weight:bold;-webkit-text-stroke:0.22px;">Nº Contrato Manut.:</span>
<div class="inp" style="left:374px;top:246px;width:81px;height:20px;"></div>
<span class="t" style="top:250.00px;font-size:11px;line-height:12px;letter-spacing:0.397px;left:493.00px;color:#16162a;font-weight:bold;-webkit-text-stroke:0.22px;">Nº Placa:</span>
<div class="inp" style="left:548px;top:246px;width:117px;height:20px;"></div>
<span class="t" style="top:251.00px;font-size:11px;line-height:12px;letter-spacing:0.657px;left:670.00px;color:#16162a;font-weight:bold;-webkit-text-stroke:0.22px;">Nº Tubo:</span>
<div class="inp" style="left:725px;top:247px;width:193px;height:20px;"></div>
<span class="t" style="top:276.00px;font-size:11px;line-height:12px;letter-spacing:0.141px;left:63.50px;color:#16162a;font-weight:bold;-webkit-text-stroke:0.22px;">Serial.......:</span>
<div class="inp" style="left:128px;top:272px;width:122px;height:20px;"></div>
<span class="t" style="top:278.00px;font-size:11px;line-height:12px;letter-spacing:0.117px;left:258.50px;color:#16162a;font-weight:bold;-webkit-text-stroke:0.22px;">Patrimonio...............:</span>
<div class="inp" style="left:374px;top:272px;width:115px;height:20px;"></div>
<div style="left:375px;top:277px;width:5px;height:14px;background:#ebedf1;"></div>
<span class="t" style="top:276.00px;font-size:11px;line-height:12px;letter-spacing:0.190px;left:493.00px;color:#16162a;font-weight:bold;-webkit-text-stroke:0.22px;">Técnico.:</span>
<div class="inp" style="left:548px;top:272px;width:117px;height:20px;"></div>
<span class="t" style="top:276.00px;font-size:11.5px;line-height:12px;letter-spacing:-0.796px;left:552.00px;color:#222;">ANDERSON LUIZ DE S</span>
<div class="btn" style="left:723px;top:271px;width:128px;height:22px;"></div>
<svg style="left:728px;top:275px" width="14" height="15" viewBox="0 0 14 15"><rect x="1.5" y="2.5" width="11" height="12" rx="1" fill="#e8a64a" stroke="#c47f22"/><rect x="3.5" y="4.5" width="7" height="8" fill="#f8f8fb" stroke="#d9d9e2" stroke-width=".6"/><rect x="4.5" y="0.8" width="5" height="3" rx="1" fill="#b9bfc9" stroke="#8c929c" stroke-width=".6"/><path d="M5 7 H9 M5 9 H9 M5 11 H8" stroke="#b5b8d8" stroke-width=".8"/></svg>
<span class="t" style="top:276.00px;font-size:11px;line-height:12px;letter-spacing:0.522px;left:748.00px;color:#1a1a2e;font-weight:bold;-webkit-text-stroke:0.22px;">Observações Int.</span>
<div class="btn" style="left:856px;top:271px;width:128px;height:22px;"></div>
<svg style="left:861px;top:275px" width="13" height="15" viewBox="0 0 13 15"><rect x="0.5" y="0.5" width="12" height="14" fill="#f4f8fd" stroke="#4f7fc0"/><path d="M3 4 L4.5 6 L7 2.5" fill="none" stroke="#c8201c" stroke-width="1.2"/><path d="M3 8.5 L4.5 10.5 L7 7" fill="none" stroke="#c8201c" stroke-width="1.2"/><path d="M3 12.5 H8" stroke="#c8201c" stroke-width="1"/></svg>
<span class="t" style="top:276.00px;font-size:11px;line-height:12px;letter-spacing:0.146px;left:882.00px;color:#1a1a2e;font-weight:bold;-webkit-text-stroke:0.22px;">Exibir Acessórios</span>
<div style="left:63px;top:297px;width:228px;height:103px;background:#fff;border:1px solid #2469a0;box-shadow:1px 1px 0 #d3eaf6;"></div>
<div style="left:63px;top:297px;width:228px;height:17px;background:#1e6ba8;"></div>
<div style="left:272px;top:316px;width:18px;height:83px;background:#f4f4f6;"></div>
<svg style="left:277px;top:321.3px" width="7" height="4" viewBox="0 0 7 4"><path d="M0 4 H7 L3.5 0Z" fill="#c2c2c2"/></svg>
<svg style="left:277px;top:388px" width="7" height="4" viewBox="0 0 7 4"><path d="M0 0 H7 L3.5 4Z" fill="#c2c2c2"/></svg>
<span class="t" style="top:298.00px;font-size:11px;line-height:12px;letter-spacing:0.026px;left:65.50px;color:#fff;font-weight:bold;-webkit-text-stroke:0.22px;-webkit-text-stroke:0;">LAUDO TÉCNICO</span>
<div style="left:296px;top:296px;width:223px;height:103px;background:#fff;border:1px solid #2469a0;box-shadow:1px 1px 0 #d3eaf6;"></div>
<div style="left:296px;top:296px;width:223px;height:17px;background:#1e6ba8;"></div>
<div style="left:500px;top:315px;width:18px;height:83px;background:#f4f4f6;"></div>
<svg style="left:505px;top:320.3px" width="7" height="4" viewBox="0 0 7 4"><path d="M0 4 H7 L3.5 0Z" fill="#c2c2c2"/></svg>
<svg style="left:505px;top:387px" width="7" height="4" viewBox="0 0 7 4"><path d="M0 0 H7 L3.5 4Z" fill="#c2c2c2"/></svg>
<span class="t" style="top:297.00px;font-size:11px;line-height:12px;letter-spacing:0.045px;left:298.50px;color:#fff;font-weight:bold;-webkit-text-stroke:0.22px;-webkit-text-stroke:0;">DEFEITO ALEGADO PELO CLIENTE</span>
<div style="left:525px;top:296px;width:228px;height:103px;background:#fff;border:1px solid #2469a0;box-shadow:1px 1px 0 #d3eaf6;"></div>
<div style="left:525px;top:296px;width:228px;height:17px;background:#1e6ba8;"></div>
<div style="left:734px;top:315px;width:18px;height:83px;background:#f4f4f6;"></div>
<svg style="left:739px;top:320.3px" width="7" height="4" viewBox="0 0 7 4"><path d="M0 4 H7 L3.5 0Z" fill="#c2c2c2"/></svg>
<svg style="left:739px;top:387px" width="7" height="4" viewBox="0 0 7 4"><path d="M0 0 H7 L3.5 4Z" fill="#c2c2c2"/></svg>
<span class="t" style="top:297.00px;font-size:11px;line-height:12px;letter-spacing:0.093px;left:527.50px;color:#fff;font-weight:bold;-webkit-text-stroke:0.22px;-webkit-text-stroke:0;">APARÊNCIA DO PROD. / APARELHO</span>
<div style="left:758px;top:296px;width:227px;height:103px;background:#fff;border:1px solid #2469a0;box-shadow:1px 1px 0 #d3eaf6;"></div>
<div style="left:758px;top:296px;width:227px;height:17px;background:#1e6ba8;"></div>
<div style="left:966px;top:315px;width:18px;height:83px;background:#f4f4f6;"></div>
<svg style="left:971px;top:320.3px" width="7" height="4" viewBox="0 0 7 4"><path d="M0 4 H7 L3.5 0Z" fill="#c2c2c2"/></svg>
<svg style="left:971px;top:387px" width="7" height="4" viewBox="0 0 7 4"><path d="M0 0 H7 L3.5 4Z" fill="#c2c2c2"/></svg>
<span class="t" style="top:297.00px;font-size:11px;line-height:12px;letter-spacing:0.040px;left:760.50px;color:#fff;font-weight:bold;-webkit-text-stroke:0.22px;-webkit-text-stroke:0;">OBSERVAÇÕES</span>
<div class="btn" style="left:909px;top:405px;width:75px;height:22px;"></div>
<svg style="left:913px;top:408px" width="16" height="16" viewBox="0 0 16 16"><circle cx="8" cy="8" r="7.3" fill="#4caf3f" stroke="#2d7f26" stroke-width="1"/><path d="M2.5 6 A6 6 0 0 1 13.5 6 A8 5 0 0 0 2.5 6Z" fill="#9bdc8a" opacity=".8"/><path d="M4.2 8.2 L7 11 L12 5" fill="none" stroke="#fff" stroke-width="2.2" stroke-linecap="round" stroke-linejoin="round"/></svg>
<span class="t" style="top:410.00px;font-size:11.5px;line-height:12px;letter-spacing:0.418px;left:936.00px;color:#15153a;font-weight:bold;-webkit-text-stroke:0.22px;">Alterar</span>
<span class="t" style="top:417.00px;font-size:11px;line-height:12px;letter-spacing:-0.007px;left:64.00px;color:#2f3340;">Forma Pagamento</span>
<span class="t" style="top:417.00px;font-size:11px;line-height:12px;letter-spacing:0.121px;left:301.00px;color:#2f3340;">Tipo Pagamento</span>
<span class="t" style="top:447.00px;font-size:11px;line-height:12px;letter-spacing:0.162px;left:64.00px;color:#2f3340;">Valor CH Avulso</span>
<span class="t" style="top:447.00px;font-size:11px;line-height:12px;letter-spacing:0.267px;left:184.00px;color:#2f3340;">Total Desconto</span>
<span class="t" style="top:447.00px;font-size:11px;line-height:12px;letter-spacing:0.319px;left:304.00px;color:#2f3340;">Desconto %</span>
<span class="t" style="top:460.00px;font-size:11.5px;line-height:12px;letter-spacing:0.154px;left:67.60px;color:#1a2036;font-weight:bold;-webkit-text-stroke:0.22px;">0,00</span>
<span class="t" style="top:460.00px;font-size:11.5px;line-height:12px;letter-spacing:0.154px;left:186.60px;color:#1a2036;font-weight:bold;-webkit-text-stroke:0.22px;">0,00</span>
<span class="t" style="top:460.00px;font-size:11.5px;line-height:12px;letter-spacing:0.154px;left:306.60px;color:#1a2036;font-weight:bold;-webkit-text-stroke:0.22px;">0,00</span>
<span class="t" style="top:476.00px;font-size:11px;line-height:12px;letter-spacing:0.301px;left:64.00px;color:#2f3340;">Total Juros</span>
<span class="t" style="top:476.00px;font-size:11px;line-height:12px;letter-spacing:0.219px;left:183.00px;color:#2f3340;">Valor Frete</span>
<span class="t" style="top:489.00px;font-size:11.5px;line-height:12px;letter-spacing:0.154px;left:67.60px;color:#1a2036;font-weight:bold;-webkit-text-stroke:0.22px;">0,00</span>
<span class="t" style="top:489.00px;font-size:11.5px;line-height:12px;letter-spacing:0.154px;left:186.60px;color:#1a2036;font-weight:bold;-webkit-text-stroke:0.22px;">0,00</span>
<span class="t" style="top:505.00px;font-size:11px;line-height:12px;letter-spacing:0.300px;left:64.00px;color:#2f3340;">Transportadora</span>
<span class="t" style="top:533.00px;font-size:11px;line-height:12px;letter-spacing:0.164px;left:64.00px;color:#2f3340;">Frete por Conta</span>
<span class="t" style="top:533.00px;font-size:11px;line-height:12px;letter-spacing:0.057px;left:169.30px;color:#2f3340;">Data Entrega</span>
<span class="t" style="top:533.00px;font-size:11px;line-height:12px;letter-spacing:0.131px;left:271.00px;color:#2f3340;">Hora Entrega</span>
<div style="left:449px;top:442px;width:539px;height:116px;background:linear-gradient(90deg,#fbfbf2,#fff 60%);border:1px solid #9aa7bd;"></div>
<div style="left:449px;top:441px;width:127px;height:2px;background:#eaecf0;"></div>
<div style="left:450px;top:443px;width:537px;height:20px;background:linear-gradient(#f7fafe,#dde8f7);border-bottom:1px solid #9fb3d1;"></div>
<span class="t" style="top:427.00px;font-size:11px;line-height:12px;letter-spacing:0.469px;left:448.30px;color:#111;font-weight:bold;-webkit-text-stroke:0.22px;">Lista de parcelamento</span>
<div style="left:450px;top:463px;width:16px;height:21px;background:#e3edf9;border-bottom:1px solid #9fb3d1;"></div>
<div style="left:466px;top:463px;width:75px;height:21px;background:#fff;border-bottom:1px solid #9fb3d1;"></div>
<div style="left:541px;top:463px;width:446px;height:21px;background:linear-gradient(#2a6ea8,#1b5a90);"></div>
<div style="left:450px;top:484px;width:16px;height:21px;background:#e3edf9;border-bottom:1px solid #9fb3d1;"></div>
<div style="left:466px;top:484px;width:521px;height:21px;background:#cbe6f6;border-bottom:1px solid #9fb3d1;"></div>
<div style="left:465px;top:443px;width:1px;height:62px;background:#9fb3d1;"></div>
<div style="left:540px;top:443px;width:1px;height:62px;background:#9fb3d1;"></div>
<div style="left:633px;top:443px;width:1px;height:62px;background:#9fb3d1;"></div>
<div style="left:711px;top:443px;width:1px;height:62px;background:#9fb3d1;"></div>
<div style="left:790px;top:443px;width:1px;height:62px;background:#9fb3d1;"></div>
<div style="left:879px;top:443px;width:1px;height:62px;background:#9fb3d1;"></div>
<svg style="left:456px;top:469px" width="4" height="8" viewBox="0 0 4 8"><path d="M0 0 L4 4 L0 8Z" fill="#111"/></svg>
<span class="t" style="top:446.00px;font-size:11px;line-height:12px;letter-spacing:0.119px;left:470.00px;color:#222;">Data Venc.</span>
<span class="t" style="top:446.00px;font-size:11px;line-height:12px;letter-spacing:0.115px;left:545.00px;color:#222;">Valor Receber</span>
<span class="t" style="top:446.00px;font-size:11px;line-height:12px;letter-spacing:0.020px;left:638.00px;color:#222;">Juros</span>
<span class="t" style="top:446.00px;font-size:11px;line-height:12px;letter-spacing:0.237px;left:716.00px;color:#222;">Nº Doc</span>
<span class="t" style="top:446.00px;font-size:11px;line-height:12px;letter-spacing:0.147px;left:795.00px;color:#222;">Tipo Pag.</span>
<span class="t" style="top:446.00px;font-size:11px;line-height:12px;letter-spacing:0.121px;left:884.00px;color:#222;">Bandeira</span>
<span class="t" style="top:467.00px;font-size:11px;line-height:12px;letter-spacing:0.176px;left:470.00px;color:#222;">18/11/2024</span>
<span class="t" style="top:467.00px;font-size:11px;line-height:12px;letter-spacing:-0.108px;right:1290.11px;color:#fff;">193,74</span>
<span class="t" style="top:467.00px;font-size:11px;line-height:12px;letter-spacing:-0.238px;left:795.00px;color:#fff;">CARTAO DE D...</span>
<span class="t" style="top:488.00px;font-size:11px;line-height:12px;letter-spacing:0.095px;left:470.00px;color:#222;">18/12/2024</span>
<span class="t" style="top:488.00px;font-size:11px;line-height:12px;letter-spacing:-0.108px;right:1290.11px;color:#222;">193,73</span>
<span class="t" style="top:488.00px;font-size:11px;line-height:12px;letter-spacing:-0.238px;left:795.00px;color:#222;">CARTAO DE D...</span>
<div style="left:51px;top:797px;width:1869px;height:241px;background:#f5f5f5;border:1px solid #c9cdd3;"></div>
<span class="t" style="top:809.00px;font-size:11px;line-height:12px;letter-spacing:0.244px;left:64.00px;color:#333;font-weight:bold;-webkit-text-stroke:0.22px;">Produtos e Serviços usado na O.S selecionada</span>
<svg style="left:1899px;top:811px" width="9" height="7" viewBox="0 0 9 7"><rect x="0.5" y="0.5" width="8" height="6" fill="#fff" stroke="#555"/><rect x="0" y="0" width="9" height="2" fill="#555"/></svg>
<div style="left:54px;top:834px;width:1864px;height:180px;background:#fff;border:1px solid #a9adb3;"></div>
<div style="left:55px;top:835px;width:1862px;height:20px;background:#f0f0f0;border-bottom:1px solid #a0a0a0;"></div>
<div style="left:55px;top:855px;width:19px;height:21px;background:#f0f0f0;border-bottom:1px solid #c9c9c9;"></div>
<div style="left:74px;top:855px;width:1843px;height:21px;background:linear-gradient(rgba(255,255,255,.2),rgba(255,255,255,0) 45%,rgba(0,0,40,.16)),linear-gradient(90deg,#5a6ed2,#0b1285);border-bottom:1px solid #d4e4f6;"></div>
<span class="t" style="top:859.00px;font-size:11px;line-height:12px;letter-spacing:-0.300px;left:78.50px;color:#fff;">S</span>
<span class="t" style="top:859.00px;font-size:11px;line-height:12px;letter-spacing:-0.300px;left:159.00px;color:#fff;">2</span>
<span class="t" style="top:859.00px;font-size:11px;line-height:12px;letter-spacing:-0.291px;left:338.50px;color:#fff;">MANUTENCAO / REPARO</span>
<span class="t" style="top:859.00px;font-size:11px;line-height:12px;letter-spacing:-0.300px;right:631.30px;color:#fff;">1</span>
<span class="t" style="top:859.00px;font-size:11px;line-height:12px;letter-spacing:-0.300px;right:496.30px;color:#fff;">0</span>
<span class="t" style="top:859.00px;font-size:11px;line-height:12px;letter-spacing:-0.300px;right:276.30px;color:#fff;">R$ 200,00</span>
<span class="t" style="top:859.00px;font-size:11px;line-height:12px;letter-spacing:-0.300px;right:6.30px;color:#fff;">R$ 200,00</span>
<div style="left:55px;top:876px;width:19px;height:21px;background:#f0f0f0;border-bottom:1px solid #c9c9c9;"></div>
<div style="left:74px;top:876px;width:1843px;height:21px;background:#fff;border-bottom:1px solid #b9d3d3;"></div>
<span class="t" style="top:880.00px;font-size:11px;line-height:12px;letter-spacing:-0.300px;left:78.50px;color:#333;">P</span>
<span class="t" style="top:880.00px;font-size:11px;line-height:12px;letter-spacing:-0.300px;left:159.00px;color:#333;">000034</span>
<span class="t" style="top:880.00px;font-size:11px;line-height:12px;letter-spacing:-0.179px;left:338.50px;color:#333;">CONECTOR CUNHA OTIMIZADO ALUM. VM CN12 S</span>
<span class="t" style="top:880.00px;font-size:11px;line-height:12px;letter-spacing:-1.391px;left:1102.00px;color:#333;">PC</span>
<span class="t" style="top:880.00px;font-size:11px;line-height:12px;letter-spacing:-0.300px;right:631.30px;color:#333;">10</span>
<span class="t" style="top:880.00px;font-size:11px;line-height:12px;letter-spacing:-0.300px;right:496.30px;color:#333;">0</span>
<span class="t" style="top:880.00px;font-size:11px;line-height:12px;letter-spacing:-0.300px;right:276.30px;color:#333;">R$ 1,16</span>
<span class="t" style="top:880.00px;font-size:11px;line-height:12px;letter-spacing:-0.300px;right:6.30px;color:#333;">R$ 11,56</span>
<div style="left:55px;top:897px;width:19px;height:21px;background:#f0f0f0;border-bottom:1px solid #c9c9c9;"></div>
<div style="left:74px;top:897px;width:1843px;height:21px;background:#f0f0f0;border-bottom:1px solid #b9d3d3;"></div>
<span class="t" style="top:901.00px;font-size:11px;line-height:12px;letter-spacing:-0.300px;left:78.50px;color:#333;">P</span>
<span class="t" style="top:901.00px;font-size:11px;line-height:12px;letter-spacing:-0.300px;left:159.00px;color:#333;">000051</span>
<span class="t" style="top:901.00px;font-size:11px;line-height:12px;letter-spacing:-0.301px;left:338.50px;color:#333;">CRUZETA 2000X90X90MM</span>
<span class="t" style="top:901.00px;font-size:11px;line-height:12px;letter-spacing:-1.391px;left:1102.00px;color:#333;">PC</span>
<span class="t" style="top:901.00px;font-size:11px;line-height:12px;letter-spacing:-0.300px;right:631.30px;color:#333;">5</span>
<span class="t" style="top:901.00px;font-size:11px;line-height:12px;letter-spacing:-0.300px;right:496.30px;color:#333;">0</span>
<span class="t" style="top:901.00px;font-size:11px;line-height:12px;letter-spacing:-0.300px;right:276.30px;color:#333;">R$ 25,18</span>
<span class="t" style="top:901.00px;font-size:11px;line-height:12px;letter-spacing:-0.300px;right:6.30px;color:#333;">R$ 125,91</span>
<div style="left:73px;top:835px;width:1px;height:83px;background:#9fb9bd;"></div>
<div style="left:154px;top:835px;width:1px;height:83px;background:#9fb9bd;"></div>
<div style="left:154px;top:855px;width:1px;height:20px;background:#a9c6ee;"></div>
<div style="left:333px;top:835px;width:1px;height:83px;background:#9fb9bd;"></div>
<div style="left:333px;top:855px;width:1px;height:20px;background:#a9c6ee;"></div>
<div style="left:1062px;top:835px;width:1px;height:83px;background:#9fb9bd;"></div>
<div style="left:1062px;top:855px;width:1px;height:20px;background:#a9c6ee;"></div>
<div style="left:1153px;top:835px;width:1px;height:83px;background:#9fb9bd;"></div>
<div style="left:1153px;top:855px;width:1px;height:20px;background:#a9c6ee;"></div>
<div style="left:1292px;top:835px;width:1px;height:83px;background:#9fb9bd;"></div>
<div style="left:1292px;top:855px;width:1px;height:20px;background:#a9c6ee;"></div>
<div style="left:1427px;top:835px;width:1px;height:83px;background:#9fb9bd;"></div>
<div style="left:1427px;top:855px;width:1px;height:20px;background:#a9c6ee;"></div>
<div style="left:1647px;top:835px;width:1px;height:83px;background:#9fb9bd;"></div>
<div style="left:1647px;top:855px;width:1px;height:20px;background:#a9c6ee;"></div>
<svg style="left:62px;top:861.5px" width="4" height="8" viewBox="0 0 4 8"><path d="M0 0 L4 4 L0 8Z" fill="#555"/></svg>
<span class="t" style="top:838.00px;font-size:11px;line-height:12px;letter-spacing:0.252px;left:78.00px;color:#333;">Tipo</span>
<span class="t" style="top:838.00px;font-size:11px;line-height:12px;letter-spacing:0.357px;left:159.00px;color:#333;">Codigo</span>
<span class="t" style="top:838.00px;font-size:11px;line-height:12px;letter-spacing:-0.101px;left:338.50px;color:#333;">Descrição</span>
<span class="t" style="top:838.00px;font-size:11px;line-height:12px;letter-spacing:-0.444px;left:1100.00px;color:#333;">UN</span>
<span class="t" style="top:838.00px;font-size:11px;line-height:12px;letter-spacing:0.423px;left:1214.00px;color:#333;">Qtd</span>
<span class="t" style="top:838.00px;font-size:11px;line-height:12px;letter-spacing:-0.351px;left:1297.00px;color:#333;">Desc. %</span>
<span class="t" style="top:838.00px;font-size:11px;line-height:12px;letter-spacing:0.427px;right:275.57px;color:#333;">Valor</span>
<span class="t" style="top:838.00px;font-size:11px;line-height:12px;letter-spacing:0.458px;right:5.54px;color:#333;">Valor Total</span>
<div style="left:54px;top:1016px;width:1865px;height:21px;background:#e4edfb;border-left:1px solid #2a4a7a;border-right:1px solid #2a4a7a;"></div>
<div style="left:44px;top:1037px;width:1876px;height:1px;background:#b4b4b4;"></div>
<div style="left:1240px;top:1017px;width:1px;height:20px;background:#444;"></div>
<div style="left:1466px;top:1017px;width:1px;height:20px;background:#444;"></div>
<div style="left:1692px;top:1017px;width:1px;height:20px;background:#444;"></div>
<span class="t" style="top:1021.00px;font-size:11px;line-height:12px;letter-spacing:0.330px;left:1243.00px;color:#333;font-weight:bold;-webkit-text-stroke:0.22px;">Total Serviços:</span>
<span class="t" style="top:1021.00px;font-size:11px;line-height:12px;letter-spacing:-0.251px;right:461.25px;color:#444;">R$ 200,00</span>
<span class="t" style="top:1021.00px;font-size:11px;line-height:12px;letter-spacing:0.436px;left:1469.00px;color:#333;font-weight:bold;-webkit-text-stroke:0.22px;">Total Produtos:</span>
<span class="t" style="top:1021.00px;font-size:11px;line-height:12px;letter-spacing:-0.251px;right:233.25px;color:#444;">R$ 137,47</span>
<span class="t" style="top:1021.00px;font-size:11px;line-height:12px;letter-spacing:0.474px;left:1695.00px;color:#333;font-weight:bold;-webkit-text-stroke:0.22px;">Total Geral:</span>
<span class="t" style="top:1021.00px;font-size:11px;line-height:12px;letter-spacing:-0.251px;right:6.25px;color:#444;">R$ 337,47</span>
</div>
</body></html>
